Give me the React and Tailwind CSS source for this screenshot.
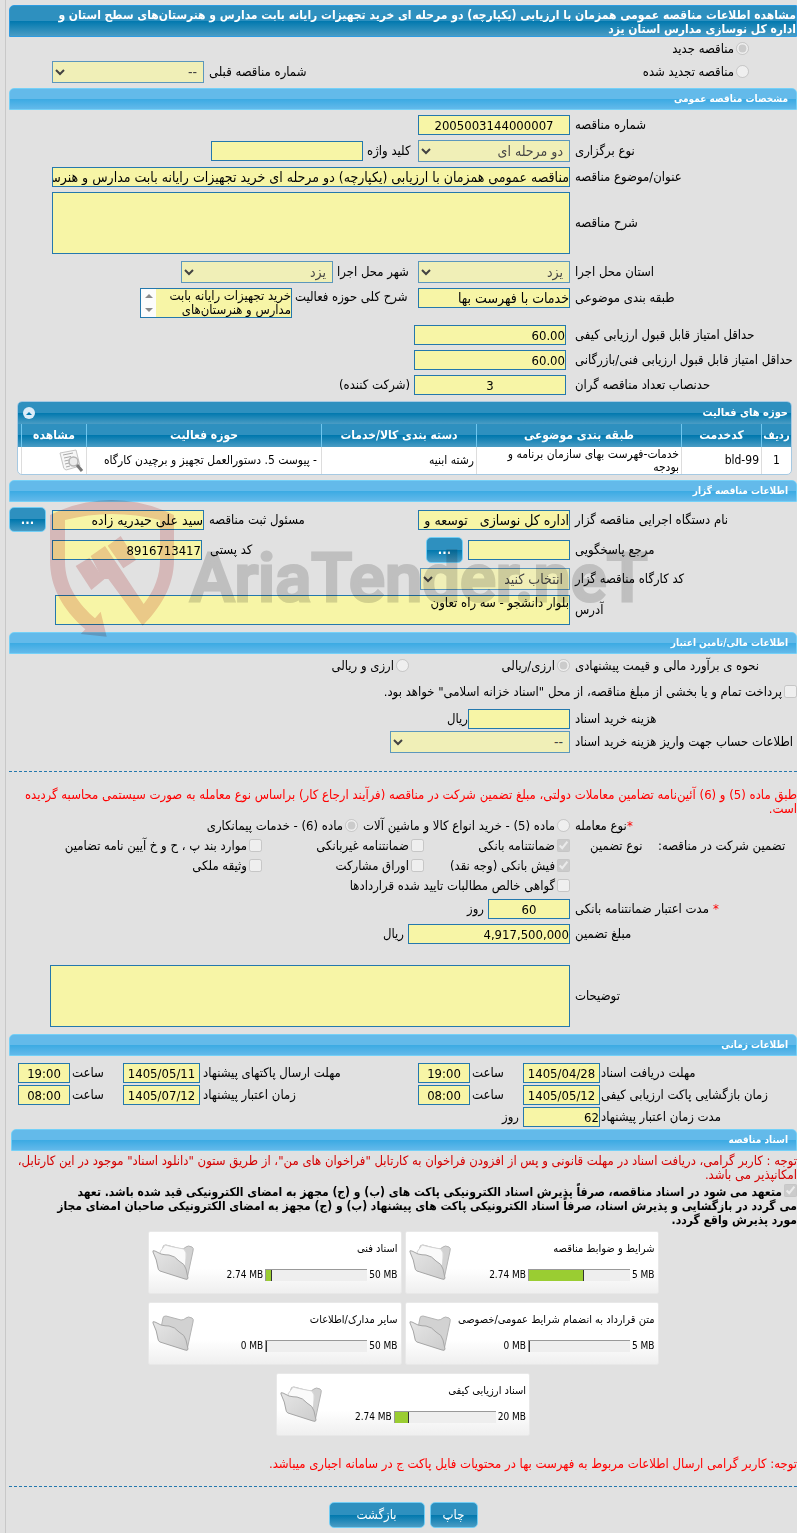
import React from "react";

const fieldStyle =
  "border border-[#2478ad] bg-[#f7f5a6] text-black leading-[18px] h-5 shrink-0 outline-none";
const darkBar =
  "bg-[linear-gradient(to_bottom,#2e90bf_0%,#2e90bf_50%,#0078ae_50%,#4a9cc4_100%)]";
const lightBar =
  "bg-[linear-gradient(to_bottom,#63baea_0%,#63baea_50%,#3baae3_50%,#63b9ea_100%)]";

const SectionBar = ({ children, className = "" }) => (
  <h2
    className={`flex h-[22px] items-center rounded-t-[5px] border border-[#74d0f7] pr-2 text-[10px] leading-[14px] font-bold text-white ${lightBar} ${className}`}
  >
    {children}
  </h2>
);

const Row = ({ label, id, children, className = "" }) => (
  <div className={`flex items-center ${className}`}>
    <label
      htmlFor={id}
      className="ml-[5px] flex w-[222px] shrink-0 justify-end whitespace-nowrap"
    >
      {label}
    </label>
    {children}
  </div>
);

const SideLabel = ({ id, children, className }) => (
  <label
    htmlFor={id}
    className={`flex shrink-0 justify-end whitespace-nowrap ${className}`}
  >
    {children}
  </label>
);

const Field = ({ id, value = "", className }) => (
  <input
    id={id}
    type="text"
    readOnly
    value={value}
    className={`${fieldStyle} ${className}`}
  />
);

const Area = ({ id, value = "", className }) => (
  <textarea
    id={id}
    readOnly
    value={value}
    className={`block shrink-0 resize-none overflow-hidden border border-[#2478ad] bg-[#f7f5a6] leading-[14px] text-black outline-none ${className}`}
  />
);

const Picker = ({ id, value, className }) => (
  <select
    id={id}
    disabled
    className={`h-[22px] shrink-0 border border-[#2478ad] bg-[#f7f5a6] pr-[2px] text-[14px] text-black opacity-70 ${className}`}
  >
    <option>{value}</option>
  </select>
);

const Choice = ({ type = "checkbox", name, checked = false, children, className = "" }) => (
  <label className={`flex shrink-0 items-center gap-[2px] whitespace-nowrap ${className}`}>
    <input
      type={type}
      name={name}
      disabled
      defaultChecked={checked}
      className="mb-[2px] h-[13px] w-[13px] shrink-0"
    />
    {children}
  </label>
);

const DarkButton = ({ children, className = "" }) => (
  <button
    type="button"
    className={`shrink-0 rounded-[5px] border border-[#72cdf4] text-white ${darkBar} ${className}`}
  >
    {children}
  </button>
);

const DocumentIcon = () => (
  <svg width="26" height="24" viewBox="0 0 26 24" fill="none">
    <path d="M2 4L18 1L22 17L8 21Q5 20 5 16Z" fill="#f6f6f6" stroke="#c4c4c4" />
    <path
      d="M5 6L15 4M6 9L13 7.500M6.500 12L11 11M7 15L11 14M8 18L12 17"
      stroke="#a9a9a9"
    />
    <circle cx="15.500" cy="12.500" r="4.500" fill="#ececec" stroke="#b5b5b5" strokeWidth="1.500" />
    <path d="M19 16L24 22" stroke="#777" strokeWidth="3" />
  </svg>
);

const FolderIcon = ({ full }) => (
  <svg width="42" height="38" viewBox="0 0 42 38" className="shrink-0">
    <defs>
      <linearGradient id="folderFront" x1="0" y1="0" x2="1" y2="1">
        <stop offset="0" stopColor="#e6e6e6" />
        <stop offset="1" stopColor="#cccccc" />
      </linearGradient>
    </defs>
    <path
      d="M9 13L11 3Q11 1 14 1L29 5Q32 5 34 3Q36 1 40 3Q42 4 41 7L35 35L8 26Z"
      fill="#d2d2d2"
      stroke="#b4b4b4"
    />
    {full && (
      <path
        d="M8 8L13 1Q20 3 32 5Q35 8 34 14L33 28L12 24Z"
        fill="#fafafa"
        stroke="#d4d4d4"
      />
    )}
    <path
      d="M1 8Q0 6 3 7L9 10Q13 11 17 11Q23 12 27 17Q33 20 34 25L36 34Q36 36 33 35L8 27Q6 26 6 24Q5 16 1 8Z"
      fill="url(#folderFront)"
      stroke="#a6a6a6"
    />
  </svg>
);

const Watermark = () => (
  <div
    dir="ltr"
    aria-hidden="true"
    className="pointer-events-none absolute top-5 left-[41px] mix-blend-multiply"
  >
    <svg width="620" height="140" viewBox="0 0 620 140">
      <g transform="scale(0.3333) translate(-150 -60)">
        <path
          d="M150 105Q240 60 335 60Q430 60 522 105V240C522 320 480 385 428 437L325 297L307 297L272 228L315 198L362 268L431 372C465 330 480 285 480 240V120Q410 102 335 102Q265 102 195 120V245C195 320 240 375 285 415L302 395L320 470L242 462L256 448C185 385 150 320 150 240Z"
          fill="#f2d1d1"
        />
        <path d="M227 258L268 233L313 298L274 330Z" fill="#f2d1d1" />
        <path d="M323 197L362 168L408 240L370 265Z" fill="#f2d1d1" />
      </g>
      <text
        x="140"
        y="101"
        fontSize="67"
        fontWeight="500"
        fill="#d9d9d9"
        stroke="#d9d9d9"
        strokeWidth="3"
        fontFamily="Roboto, 'Liberation Sans', sans-serif"
      >
        AriaTender.neT
      </text>
    </svg>
  </div>
);

const UploadCard = ({ title, used, total }) => (
  <div className="flex h-[63px] w-[254px] items-center rounded-[2px] border border-[#e8e8e8] bg-[linear-gradient(to_bottom,#fff_0%,#fff_60%,#efefef_100%)] text-[10px] leading-[14px]">
    <div className="flex grow flex-col items-start gap-3 pr-[3px] pb-[2px]">
      <h3 className="text-[11px]">{title}</h3>
      <div className="flex items-center gap-[2px]">
        <span dir="ltr">{total} MB</span>
        <div
          dir="ltr"
          className="h-3 w-[102px] border-t border-l border-[#999] bg-[#eee]"
        >
          <div
            className="h-full min-w-px border-r border-[#333] bg-[#9acd32]"
            style={{ width: `${(used / total) * 100}%` }}
          />
        </div>
        <span dir="ltr">{used} MB</span>
      </div>
    </div>
    <div className="ml-[3px]">
      <FolderIcon full={used > 0} />
    </div>
  </div>
);

const ActivityTable = () => {
  const th = "h-[23px] border-l border-[#6fc6ee] font-bold";
  const td = "h-[27px] border-l border-[#ddd] px-[2px]";
  return (
    <div className="mr-[5px] ml-2 overflow-hidden rounded-[5px] border border-[#a6c9e2] bg-white">
      <div className={`flex h-[22px] items-center justify-between px-[3px] text-[11px] font-bold text-white ${darkBar}`}>
        <span>حوزه های فعالیت</span>
        <button
          type="button"
          aria-label="بستن"
          className="ml-[2px] flex h-3 w-3 items-center justify-center rounded-full bg-[#dcecf8]"
        >
          <svg width="6" height="3" viewBox="0 0 6 3">
            <path d="M3 0L6 3H0Z" fill="#0078ae" />
          </svg>
        </button>
      </div>
      <table className="w-full table-fixed border-separate border-spacing-0 text-[12px] leading-[13px]">
        <thead className="text-white">
          <tr className={darkBar}>
            <th className={`w-[30px] text-[11px] ${th}`}>ردیف</th>
            <th className={`w-[80px] ${th}`}>کدخدمت</th>
            <th className={`w-[205px] ${th}`}>طبقه بندی موضوعی</th>
            <th className={`w-[155px] ${th}`}>دسته بندی کالا/خدمات</th>
            <th className={th}>حوزه فعالیت</th>
            <th className={`w-[65px] ${th}`}>مشاهده</th>
            <th className="w-[3px]"></th>
          </tr>
        </thead>
        <tbody>
          <tr>
            <td className={`text-center ${td}`}>1</td>
            <td className={td}>bld-99</td>
            <td className={td}>
              خدمات-فهرست بهای سازمان برنامه و
              <br />
              بودجه
            </td>
            <td className={td}>رشته ابنیه</td>
            <td className={`${td} pr-1`}>- پیوست 5. دستورالعمل تجهیز و برچیدن کارگاه</td>
            <td className={td}>
              <DocumentIcon />
            </td>
            <td></td>
          </tr>
        </tbody>
      </table>
    </div>
  );
};

const TimeRow = ({ items, tail }) => (
  <div className="flex items-center">
    {items.map((item, index) => (
      <React.Fragment key={item.id}>
        <SideLabel
          id={item.id}
          className={index === 0 ? "ml-px w-[196px]" : "ml-[3px] w-[215px]"}
        >
          {item.label}
        </SideLabel>
        <Field
          id={item.id}
          value={item.date}
          className={`w-[77px] ${item.time ? "text-center" : ""}`}
        />
        {item.time && (
          <>
            <SideLabel id={`${item.id}-time`} className="ml-[2px] w-[51px]">
              ساعت
            </SideLabel>
            <Field
              id={`${item.id}-time`}
              value={item.time}
              className="w-[52px] text-center"
            />
          </>
        )}
      </React.Fragment>
    ))}
    {tail}
  </div>
);

const App = () => {
  return (
    <div
      dir="rtl"
      lang="fa"
      className="overflow-hidden bg-[#e1e1e1] pl-[5px] font-['DejaVu_Sans_Condensed','DejaVu_Sans',sans-serif] text-[13px] leading-[14px] text-black"
    >
      <main className="border-l border-[#c8c8c8] pt-[5px] pb-[5px] pl-[3px]">
        <h1
          className={`h-8 overflow-hidden rounded-tl-[5px] border border-[#2e9be0] pt-[2px] text-[12px] font-bold whitespace-nowrap text-white ${darkBar}`}
        >
          مشاهده اطلاعات مناقصه عمومی همزمان با ارزیابی (یکپارچه) دو مرحله ای خرید تجهیزات رایانه بابت مدارس و هنرستان‌های سطح استان و
          <br />
          اداره کل نوسازی مدارس استان یزد
        </h1>

        <div className="flex h-6 items-center pr-12">
          <Choice type="radio" name="kind" checked>
            مناقصه جدید
          </Choice>
        </div>
        <div className="mb-[5px] flex h-[22px] items-center pr-12">
          <Choice type="radio" name="kind" className="w-[331px]">
            مناقصه تجدید شده
          </Choice>
          <SideLabel id="prev" className="ml-[5px] w-[209px]">
            شماره مناقصه قبلی
          </SideLabel>
          <Picker id="prev" value="--" className="w-[152px]" />
        </div>

        <SectionBar>مشخصات مناقصه عمومی</SectionBar>
        <div className="flex flex-col gap-[5px] pt-[5px] pb-[6px]">
          <Row label="شماره مناقصه" id="number">
            <Field id="number" value="2005003144000007" className="w-[152px] text-center" />
          </Row>
          <Row label="نوع برگزاری" id="type">
            <Picker id="type" value="دو مرحله ای" className="w-[152px]" />
            <SideLabel id="keyword" className="ml-1 w-[51px]">
              کلید واژه
            </SideLabel>
            <Field id="keyword" className="w-[152px]" />
          </Row>
          <Row label="عنوان/موضوع مناقصه" id="title">
            <Field
              id="title"
              value="مناقصه عمومی همزمان با ارزیابی (یکپارچه) دو مرحله ای خرید تجهیزات رایانه بابت مدارس و هنرستان‌های سطح استان"
              className="w-[518px] text-[14px]"
            />
          </Row>
          <Row label="شرح مناقصه" id="desc">
            <Area id="desc" className="h-[62px] w-[518px]" />
          </Row>
          <Row label="استان محل اجرا" id="province" className="mt-[2px]">
            <Picker id="province" value="یزد" className="w-[152px]" />
            <SideLabel id="city" className="ml-1 w-[81px]">
              شهر محل اجرا
            </SideLabel>
            <Picker id="city" value="یزد" className="w-[152px]" />
          </Row>
          <div className="flex h-[30px] items-start">
            <Row label="طبقه بندی موضوعی" id="category">
              <Field id="category" value="خدمات با فهرست بها" className="w-[152px] text-[14px]" />
            </Row>
            <SideLabel id="scope" className="ml-[3px] w-[123px] pt-[2px]">
              شرح کلی حوزه فعالیت
            </SideLabel>
            <div className="flex h-[30px] w-[152px] shrink-0 border border-[#2478ad] bg-[#f7f5a6]">
              <textarea
                id="scope"
                readOnly
                value={"خرید تجهیزات رایانه بابت\nمدارس و هنرستان‌های"}
                className="block min-w-0 grow resize-none overflow-hidden leading-[14px] whitespace-pre outline-none"
              />
              <div className="flex w-[15px] shrink-0 flex-col items-center justify-between bg-[#fcfcfc] py-[5px]">
                <svg width="8" height="4" viewBox="0 0 8 4">
                  <path d="M4 0L8 4H0Z" fill="#8a8a8a" />
                </svg>
                <svg width="8" height="4" viewBox="0 0 8 4">
                  <path d="M4 4L8 0H0Z" fill="#8a8a8a" />
                </svg>
              </div>
            </div>
          </div>
          <Row label="حداقل امتیاز قابل قبول ارزیابی کیفی" id="q1" className="mt-[2px]">
            <Field id="q1" value="60.00" className="mr-1 w-[152px]" />
          </Row>
          <Row label="حداقل امتیاز قابل قبول ارزیابی فنی/بازرگانی" id="q2">
            <Field id="q2" value="60.00" className="mr-1 w-[152px]" />
          </Row>
          <Row label="حدنصاب تعداد مناقصه گران" id="q3">
            <Field id="q3" value="3" className="mr-1 ml-1 w-[152px] text-center" />
            (شرکت کننده)
          </Row>
        </div>

        <ActivityTable />

        <div className="relative mt-[5px]">
          <SectionBar>اطلاعات مناقصه گزار</SectionBar>
          <div className="flex flex-col gap-[5px] pt-[5px] pb-[7px]">
            <Row label="نام دستگاه اجرایی مناقصه گزار" id="org">
              <Field
                id="org"
                value="اداره کل نوسازی   توسعه و"
                className="w-[152px] text-[14px]"
              />
              <SideLabel id="registrar" className="ml-[5px] w-[209px]">
                مسئول ثبت مناقصه
              </SideLabel>
              <Field
                id="registrar"
                value="سید علی حیدریه زاده"
                className="w-[152px] text-[14px]"
              />
              <DarkButton className="mr-[6px] h-[25px] w-[37px] font-bold">...</DarkButton>
            </Row>
            <Row label="مرجع پاسخگویی" id="ref">
              <Field id="ref" className="w-[102px]" />
              <DarkButton className="mr-[5px] h-[26px] w-[37px] font-bold">...</DarkButton>
              <SideLabel id="postal" className="ml-2 w-[216px]">
                کد پستی
              </SideLabel>
              <Field id="postal" value="8916713417" className="w-[150px]" />
            </Row>
            <Row label="کد کارگاه مناقصه گزار" id="site">
              <Picker id="site" value="انتخاب کنید" className="w-[150px]" />
            </Row>
            <Row label="آدرس" id="address">
              <Area id="address" value="بلوار دانشجو - سه راه تعاون" className="h-[30px] w-[515px]" />
            </Row>
          </div>
          <Watermark />
        </div>

        <SectionBar>اطلاعات مالی/تامین اعتبار</SectionBar>
        <div className="flex h-6 items-center">
          <span className="ml-[5px] flex w-[222px] shrink-0 justify-end whitespace-nowrap">
            نحوه ی برآورد مالی و قیمت پیشنهادی
          </span>
          <Choice type="radio" name="currency" checked className="w-[161px]">
            ارزی/ریالی
          </Choice>
          <Choice type="radio" name="currency">
            ارزی و ریالی
          </Choice>
        </div>
        <div className="mb-[3px] flex h-7 items-center">
          <Choice>
            پرداخت تمام و یا بخشی از مبلغ مناقصه، از محل "اسناد خزانه اسلامی" خواهد بود.
          </Choice>
        </div>
        <Row label="هزینه خرید اسناد" id="cost">
          <Field id="cost" className="w-[102px]" />
          ریال
        </Row>
        <Row label="اطلاعات حساب جهت واریز هزینه خرید اسناد" id="account" className="mt-[2px]">
          <Picker id="account" value="--" className="w-[180px]" />
        </Row>

        <hr className="mt-[18px] mb-4 border-t border-dashed border-[#2478ad]" />

        <p className="text-[#f00] whitespace-nowrap">
          طبق ماده (5) و (6) آئین‌نامه تضامین معاملات دولتی، مبلغ تضمین شرکت در مناقصه (فرآیند ارجاع کار) براساس نوع معامله به صورت سیستمی محاسبه گردیده
          <br />
          است.
        </p>
        <div className="flex h-5 items-center">
          <span className="ml-[5px] flex w-[222px] shrink-0 justify-end whitespace-nowrap">
            <span className="text-[#f00]">*</span>نوع معامله
          </span>
          <Choice type="radio" name="deal" className="w-[212px]">
            ماده (5) - خرید انواع کالا و ماشین آلات
          </Choice>
          <Choice type="radio" name="deal" checked>
            ماده (6) - خدمات پیمانکاری
          </Choice>
        </div>
        <div className="flex">
          <span className="flex h-5 w-[139px] shrink-0 items-center justify-end whitespace-nowrap">
            تضمین شرکت در مناقصه:
          </span>
          <span className="ml-5 flex h-5 w-[68px] shrink-0 items-center justify-end whitespace-nowrap">
            نوع تضمین
          </span>
          <div>
            <div className="flex h-5 items-center">
              <Choice checked className="w-[146px]">ضمانتنامه بانکی</Choice>
              <Choice className="w-[162px]">ضمانتنامه غیربانکی</Choice>
              <Choice>موارد بند پ ، ح و خ آیین نامه تضامین</Choice>
            </div>
            <div className="flex h-5 items-center">
              <Choice checked className="w-[146px]">فیش بانکی (وجه نقد)</Choice>
              <Choice className="w-[162px]">اوراق مشارکت</Choice>
              <Choice>وثیقه ملکی</Choice>
            </div>
            <div className="flex h-5 items-center">
              <Choice>گواهی خالص مطالبات تایید شده قراردادها</Choice>
            </div>
          </div>
        </div>
        <Row
          label={
            <>
              <span className="ml-1 text-[#f00]">*</span>مدت اعتبار ضمانتنامه بانکی
            </>
          }
          id="validity"
          className="mt-[3px]"
        >
          <Field id="validity" value="60" className="ml-1 w-[82px] text-center" />
          روز
        </Row>
        <Row label="مبلغ تضمین" id="amount" className="mt-[5px]">
          <Field id="amount" value="4,917,500,000" className="ml-1 w-[162px]" />
          ریال
        </Row>
        <Row label="توضیحات" id="notes" className="mt-[21px] mb-[7px]">
          <Area id="notes" className="h-[62px] w-[520px]" />
        </Row>

        <SectionBar>اطلاعات زمانی</SectionBar>
        <div className="flex flex-col gap-[2px] pt-[7px] pb-[2px]">
          <TimeRow
            items={[
              { id: "t1", label: "مهلت دریافت اسناد", date: "1405/04/28", time: "19:00" },
              { id: "t2", label: "مهلت ارسال پاکتهای پیشنهاد", date: "1405/05/11", time: "19:00" },
            ]}
          />
          <TimeRow
            items={[
              { id: "t3", label: "زمان بازگشایی پاکت ارزیابی کیفی", date: "1405/05/12", time: "08:00" },
              { id: "t4", label: "زمان اعتبار پیشنهاد", date: "1405/07/12", time: "08:00" },
            ]}
          />
          <TimeRow
            items={[{ id: "t5", label: "مدت زمان اعتبار پیشنهاد", date: "62" }]}
            tail={<span className="mr-1">روز</span>}
          />
        </div>

        <SectionBar className="ml-[2px]">اسناد مناقصه</SectionBar>
        <p className="mt-[3px] text-[#d40000] whitespace-nowrap">
          توجه : کاربر گرامی، دریافت اسناد در مهلت قانونی و پس از افزودن فراخوان به کارتابل "فراخوان های من"، از طریق ستون "دانلود اسناد" موجود در این کارتابل،
          <br />
          امکانپذیر می باشد.
        </p>
        <div className="mt-[2px] text-[12px] font-bold whitespace-nowrap">
          <Choice checked>
            متعهد می شود در اسناد مناقصه، صرفاً پذیرش اسناد الکترونیکی پاکت های (ب) و (ج) مجهز به امضای الکترونیکی قید شده باشد. تعهد
          </Choice>
          می گردد در بازگشایی و پذیرش اسناد، صرفاً اسناد الکترونیکی پاکت های پیشنهاد (ب) و (ج) مجهز به امضای الکترونیکی صاحبان امضای مجاز
          <br />
          مورد پذیرش واقع گردد.
        </div>

        <div className="mt-1 flex flex-wrap justify-center gap-x-[3px] gap-y-2 px-[130px]">
          <UploadCard title="شرایط و ضوابط مناقصه" used={2.74} total={5} />
          <UploadCard title="اسناد فنی" used={2.74} total={50} />
          <UploadCard title="متن قرارداد به انضمام شرایط عمومی/خصوصی" used={0} total={5} />
          <UploadCard title="سایر مدارک/اطلاعات" used={0} total={50} />
          <UploadCard title="اسناد ارزیابی کیفی" used={2.74} total={20} />
        </div>

        <p className="mt-[21px] text-[#f00]">
          توجه: کاربر گرامی ارسال اطلاعات مربوط به فهرست بها در محتویات فایل پاکت ج در سامانه اجباری میباشد.
        </p>
        <hr className="mt-[15px] mb-[15px] border-t border-dashed border-[#2478ad]" />

        <div className="flex justify-center gap-[5px]">
          <DarkButton className="h-[26px] w-[48px]">چاپ</DarkButton>
          <DarkButton className="h-[26px] w-[96px]">بازگشت</DarkButton>
        </div>
      </main>
    </div>
  );
};

export default App;
